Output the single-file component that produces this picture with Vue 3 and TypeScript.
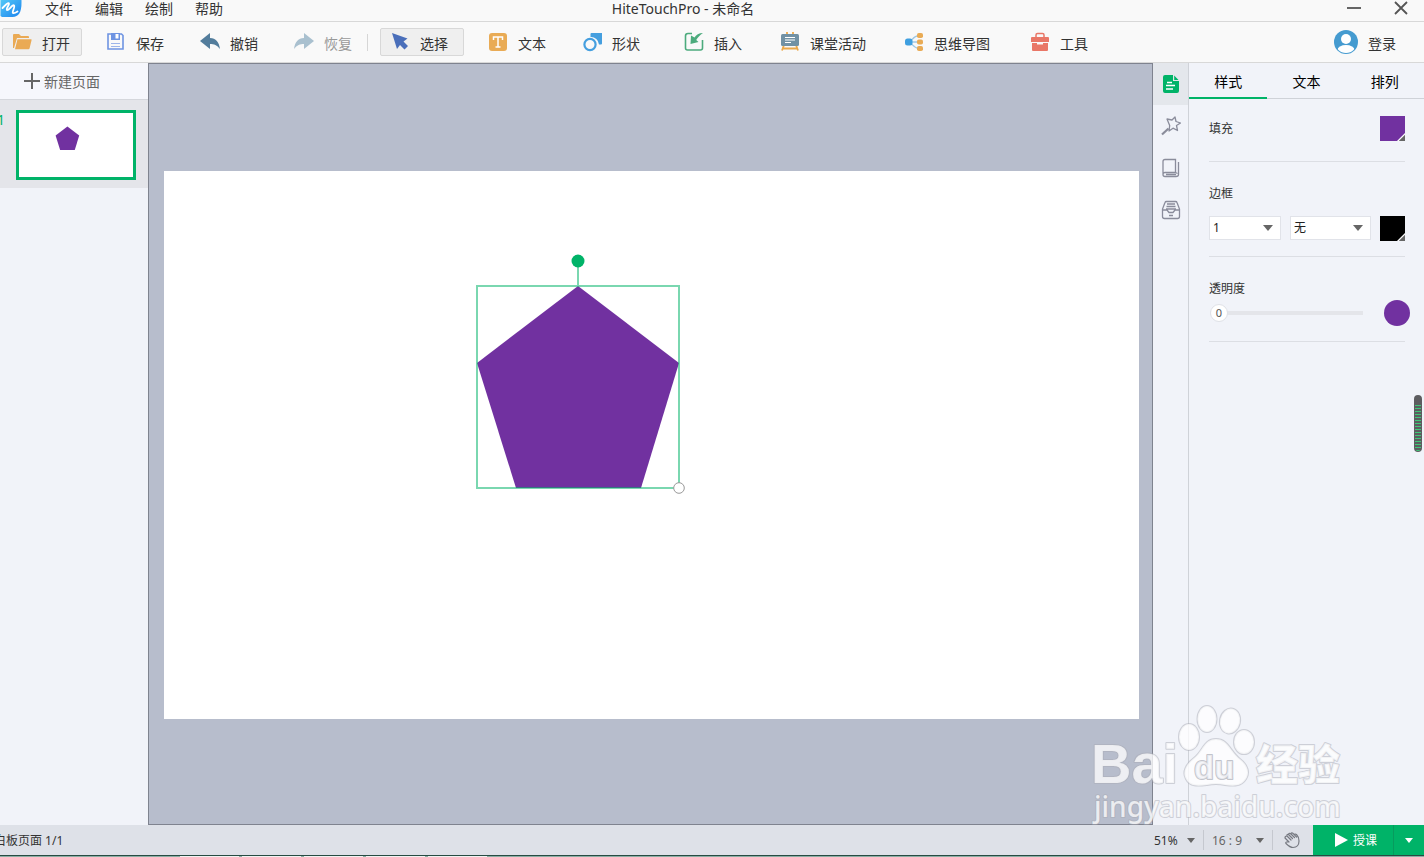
<script setup lang="ts">
import { ref } from 'vue'

interface Tool {
  id: string
  label: string
  spacing?: string
}

const menus = ['文件', '编辑', '绘制', '帮助']

const fileTools: Tool[] = [
  { id: 'open', label: '打开' },
  { id: 'save', label: '保存' },
  { id: 'undo', label: '撤销' },
  { id: 'redo', label: '恢复' },
]

const drawTools: Tool[] = [
  { id: 'select', label: '选择' },
  { id: 'text', label: '文本', spacing: 'roomy' },
  { id: 'shape', label: '形状', spacing: 'tight' },
  { id: 'insert', label: '插入', spacing: 'wide' },
  { id: 'class', label: '课堂活动' },
  { id: 'mind', label: '思维导图' },
  { id: 'kit', label: '工具', spacing: 'roomy' },
]

const tabs = ['样式', '文本', '排列']
const rail = ['page', 'wand', 'book', 'tray']

const activeTool = ref('select')
const activeTab = ref('样式')
const activeRail = ref('page')
const borderWidth = ref('1')
const borderStyle = ref('无')
const opacity = ref(0)
const zoom = ref('51%')
const ratio = ref('16 : 9')
</script>

<template>
  <div class="app">
    <header class="titlebar">
      <nav class="menu">
        <svg class="logo" viewBox="0 0 22 18" aria-hidden="true">
          <defs>
            <linearGradient id="logoFill" x1="0" y1="0" x2="1" y2="1">
              <stop offset="0" stop-color="#53c8f7" />
              <stop offset="1" stop-color="#1c83ee" />
            </linearGradient>
          </defs>
          <path d="M0 0h21v3c0 9-3 14-9 14H3c-1 0-2 0-3-1z" fill="url(#logoFill)" />
          <path d="M2 8C5 5 8 2 8.500 3.500 9 5 5 9 6.500 10 8 11 12 4 13.500 5.500 15 7 11 12 12.500 13c1 .6 3-.5 4.500-1.500" fill="none" stroke="#fff" stroke-width="1.800" stroke-linecap="round" />
        </svg>
        <button v-for="m in menus" :key="m" type="button">{{ m }}</button>
      </nav>
      <div class="title">HiteTouchPro - 未命名</div>
      <div class="window-buttons">
        <button type="button" aria-label="最小化">
          <svg viewBox="0 0 16 16"><path d="M1 8h14" stroke="#666" stroke-width="2" /></svg>
        </button>
        <button type="button" aria-label="关闭">
          <svg viewBox="0 0 16 16"><path d="M2 2l12 12M14 2L2 14" stroke="#555" stroke-width="1.800" /></svg>
        </button>
      </div>
    </header>

    <div class="toolbar">
      <div class="group files">
        <button v-for="t in fileTools" :key="t.id" type="button" class="tool" :class="{ raised: t.id === 'open' }" :disabled="t.id === 'redo'">
          <svg viewBox="0 0 20 20" aria-hidden="true">
            <g v-if="t.id === 'open'" fill="#eaaa54">
              <path d="M1 16V3q0-1 1-1h5l2 2h7q1 0 1 1v1H5L2 16z" />
              <path d="M5.500 7.200H19q.8 0 .6.8l-2 8.200q-.3 1-1.200 1H3z" />
            </g>
            <g v-else-if="t.id === 'save'">
              <path d="M2 2h13.500l1.500 1.500V17H2z" fill="#f9f9f9" stroke="#6f94e2" stroke-width="1.600" />
              <path d="M5 1h9v7H5z" fill="#6f94e2" />
              <path d="M9.500 2h3v4.500h-3z" fill="#fff" />
              <path d="M5 11.500h9M5 14.500h9" stroke="#9db5ea" stroke-width="1" />
            </g>
            <path v-else-if="t.id === 'undo'" d="M0 9L10 1v5c6 0 9 4 10 11-3-4-6-5-10-5v5z" fill="#537d9c" />
            <path v-else d="M20 9L10 1v5C4 6 1 10 0 17c3-4 6-5 10-5v5z" fill="#a9c0cf" />
          </svg>
          <span>{{ t.label }}</span>
        </button>
      </div>
      <i class="rule" />
      <div class="group draws">
        <button v-for="t in drawTools" :key="t.id" type="button" class="tool" :class="[t.spacing, { raised: t.id === activeTool }]" @click="activeTool = t.id">
          <svg viewBox="0 0 20 20" aria-hidden="true">
            <path v-if="t.id === 'select'" d="M2 1l15.500 5.500-4 3 4.500 4.500-3.500 3.500-4.500-4.500-3 4z" fill="#4a6fba" />
            <g v-else-if="t.id === 'text'">
              <rect x="1" y="1" width="18" height="18" rx="3" fill="#e9ab55" />
              <path d="M5.500 8V5h9v3M10 5v10M7.500 15h5" fill="none" stroke="#fff" stroke-width="1.500" />
            </g>
            <g v-else-if="t.id === 'shape'">
              <path d="M9.500 1H20v10.500q0 1-1 1h-2A8 8 0 0 0 8.500 5V2q0-1 1-1z" fill="#459fdf" />
              <circle cx="8" cy="12.500" r="5.600" fill="none" stroke="#459fdf" stroke-width="2.200" />
            </g>
            <g v-else-if="t.id === 'insert'">
              <path d="M8 1.500H4q-2.500 0-2.500 2.500v12q0 2 2 2h13q2 0 2-2V8" fill="none" stroke="#4cab7d" stroke-width="1.600" />
              <path d="M19 1c-4 0-7 2-8.500 4.500L7 3.500 6.500 12l8-2-2.300-2C14 5 16 3 19 1z" fill="#4cab7d" />
            </g>
            <g v-else-if="t.id === 'class'">
              <path d="M7 0v3M13 0v3M4 13l-2 5.500M16 13l2 5.500M3 16.500h14" stroke="#eba84a" stroke-width="1.800" />
              <rect x="1" y="2" width="18" height="12" rx="1.500" fill="#7191a4" />
              <path d="M5 5.500h10M5 8h10M5 10.500h6" stroke="#fff" stroke-width="1" />
            </g>
            <g v-else-if="t.id === 'mind'">
              <path d="M5 10C8 9 9 4 15 3.500M5 10h11M5 10c3 1 4 6 10 6.500" fill="none" stroke="#a0c8e3" stroke-width="1.300" />
              <rect x="1" y="6.500" width="7.500" height="7" rx="2.500" fill="#3e9fe0" />
              <g fill="#e9ab55">
                <rect x="13" y="1" width="6" height="5" rx="1.800" />
                <rect x="13" y="7.500" width="6" height="5" rx="1.800" />
                <rect x="13" y="14" width="6" height="5" rx="1.800" />
              </g>
            </g>
            <g v-else>
              <path d="M6 5.500V3Q6 1.500 7.500 1.500h5Q14 1.500 14 3v2.500" fill="none" stroke="#e97767" stroke-width="1.500" />
              <path d="M1 6q0-1 1-1h16q1 0 1 1v4H1zM2 11h5v1.500h6V11h5v7q0 1-1 1H3q-1 0-1-1z" fill="#e97767" />
            </g>
          </svg>
          <span>{{ t.label }}</span>
        </button>
      </div>
      <button type="button" class="login">
        <svg viewBox="0 0 24 24" aria-hidden="true">
          <defs><clipPath id="avatar"><circle cx="12" cy="12" r="11" /></clipPath></defs>
          <circle cx="12" cy="12" r="12" fill="#459bd0" />
          <circle cx="12" cy="9" r="5" fill="#fff" />
          <ellipse cx="12" cy="20" rx="8.500" ry="5" fill="#fff" clip-path="url(#avatar)" />
        </svg>
        <span>登录</span>
      </button>
    </div>

    <main class="work">
      <aside class="pages">
        <button type="button" class="new-page">
          <svg viewBox="0 0 16 16" aria-hidden="true"><path d="M8 0v16M0 8h16" stroke="#666" stroke-width="2" /></svg>
          <span>新建页面</span>
        </button>
        <div class="page-item">
          <span class="number">1</span>
          <button type="button" class="thumb" aria-label="页面 1">
            <svg viewBox="0 0 975 548"><path d="M414 115L515 192 477 317H352L313 192z" fill="#7131a0" /></svg>
          </button>
        </div>
      </aside>

      <section class="canvas">
        <svg class="board" viewBox="0 0 975 548">
          <rect width="975" height="548" fill="#fff" />
          <path d="M414 115L515 192 477 317H352L313 192z" fill="#7131a0" />
          <g fill="none" stroke="#00b368" stroke-opacity=".52" stroke-width="2">
            <path d="M313 115h202v202H313zM414 115V96" />
          </g>
          <circle cx="414" cy="90" r="6.500" fill="#00b368" />
          <circle cx="515" cy="317" r="5.300" fill="#fff" stroke="#999" stroke-width="1" />
        </svg>
      </section>

      <nav class="rail">
        <button v-for="r in rail" :key="r" type="button" :aria-label="r" :class="{ on: r === activeRail }" @click="activeRail = r">
          <svg viewBox="0 0 20 20" aria-hidden="true">
            <g v-if="r === 'page'">
              <path d="M4 1h8v6h6v10q0 2-2 2H4q-2 0-2-2V3q0-2 2-2zM13.200 1.500L17.500 6h-4.300z" fill="#00b368" />
              <path d="M6 8.500h5M5 11.500h9M5 15h7" stroke="#fff" stroke-width="1.300" />
            </g>
            <g v-else-if="r === 'wand'" fill="none" stroke="#8a8c9b">
              <path d="M6 3l5 1L14 1l1 4.500 4.500 1.500-4 2.500 1 5-4.500-2.300L8 15l.7-5.500z" stroke-width="1.300" stroke-linejoin="round" />
              <path d="M7.500 12.500L1 18.500" stroke-width="2.200" />
            </g>
            <g v-else-if="r === 'book'" fill="none" stroke="#8a8c9b" stroke-width="1.300">
              <path d="M4 1.500h10.500v13H4q-2 0-2 2V3.500q0-2 2-2zM2 16.500q0 2 2 2h11q2.500 0 2.500-2V4M5 16.500h10M14.500 14.500l2 1" />
            </g>
            <g v-else fill="none" stroke="#8a8c9b" stroke-width="1.300">
              <path d="M1.500 9v7.500q0 2 2 2h13q2 0 2-2V9L16 2.500q-.3-1-1.500-1h-9q-1.200 0-1.500 1zM1.500 10H6l2 2.500h4L14 10h4.500M6 4h8M5.500 6.500h9M5 9h10M8 15.500h4" />
            </g>
          </svg>
        </button>
      </nav>

      <aside class="panel">
        <div class="tabs" role="tablist">
          <button v-for="t in tabs" :key="t" type="button" role="tab" :aria-selected="t === activeTab" :class="{ on: t === activeTab }" @click="activeTab = t">{{ t }}</button>
        </div>
        <section class="prop fill">
          <span>填充</span>
          <button type="button" class="swatch purple" aria-label="填充颜色"><svg viewBox="0 0 9 9"><path d="M9 0v9H0z" fill="#fff" /><path d="M9 2v7H2z" fill="#666" /></svg></button>
        </section>
        <section class="prop border">
          <span>边框</span>
          <div class="controls">
            <label class="dropdown narrow">
              <select v-model="borderWidth" aria-label="边框粗细"><option>1</option><option>2</option></select>
            </label>
            <label class="dropdown">
              <select v-model="borderStyle" aria-label="边框样式"><option>无</option><option>实线</option></select>
            </label>
            <button type="button" class="swatch black" aria-label="边框颜色"><svg viewBox="0 0 9 9"><path d="M9 0v9H0z" fill="#fff" /><path d="M9 2v7H2z" fill="#666" /></svg></button>
          </div>
        </section>
        <section class="prop alpha">
          <label for="opacity">透明度</label>
          <div class="slider">
            <div class="track">
              <input id="opacity" v-model="opacity" type="range" min="0" max="100" />
              <output for="opacity">{{ opacity }}</output>
            </div>
            <i class="dot" />
          </div>
        </section>
        <i class="handle" />
      </aside>

      <svg class="watermark" viewBox="0 0 264 130" aria-hidden="true">
        <g fill="#fff" fill-opacity=".76" stroke="#a9abb5" stroke-opacity=".5" stroke-width="2" stroke-linejoin="round" paint-order="stroke">
          <text x="3" y="83" class="brand">Bai</text>
          <ellipse cx="101" cy="37" rx="10" ry="13" />
          <ellipse cx="119" cy="19" rx="9.500" ry="13" />
          <ellipse cx="142" cy="21" rx="10" ry="12.500" transform="rotate(12 142 21)" />
          <ellipse cx="156" cy="42" rx="10" ry="12" />
          <path d="M128 39c12 0 14 12 24 20 8 6 10 14 6 20-5 8-13 7-21 6q-9-2-18 0c-9 1-17 2-21-6-4-7 0-15 8-21 9-7 10-19 22-19z" />
          <text x="106" y="79" class="inner">du</text>
          <text x="168" y="80" class="han">经验</text>
          <text x="6" y="117" class="site">jingyan.baidu.com</text>
        </g>
      </svg>
    </main>

    <footer class="status">
      <span class="page-count">白板页面 1/1</span>
      <label class="pick zoom"><select v-model="zoom" aria-label="缩放"><option>51%</option><option>100%</option></select></label>
      <i class="divider" />
      <label class="pick ratio"><select v-model="ratio" aria-label="页面比例"><option>16 : 9</option><option>4 : 3</option></select></label>
      <i class="divider" />
      <button type="button" class="hand" aria-label="拖动">
        <svg viewBox="0 0 18 18" fill="none" stroke="#777a82" stroke-width="1.200" stroke-linecap="round" stroke-linejoin="round">
          <path d="M2 7l4 4c-2-.5-4 0-3 1.500 2 2 4 4 7 4 4 0 6-3 6-6.500C16 7 15 5 13.500 3.500q-1.500-1-2 .3L9.500 2Q8 1.500 8 3 6 1.500 5.500 3.500 3.500 3 4 5 2 5 2 7zM5.500 3.500l4 4M8 3l3.500 3.500M11.500 3.800l2 2.200M4 5l4 4" />
        </svg>
      </button>
      <div class="teach">
        <button type="button" class="start">
          <svg viewBox="0 0 13 14" aria-hidden="true"><path d="M0 0l13 7-13 7z" fill="#fff" /></svg>
          <span>授课</span>
        </button>
        <button type="button" class="more" aria-label="更多授课选项"><i /></button>
      </div>
    </footer>
    <div class="edge"><i v-for="n in 5" :key="n" /></div>
  </div>
</template>

<style>
body {
  margin: 0;
}
</style>

<style scoped>
.app {
  display: flex;
  flex-direction: column;
  height: 100vh;
  overflow: hidden;
  background: #f1f3f9;
  color: #333;
  font: 14px/20px "Noto Sans", "Noto Sans CJK SC", sans-serif;
}
button,
select {
  margin: 0;
  padding: 0;
  border: 0;
  border-radius: 0;
  background: none;
  color: inherit;
  font: inherit;
}
svg {
  display: block;
  flex: none;
}
.titlebar {
  display: grid;
  grid-template-columns: 233px 1fr 291px;
  flex: none;
  height: 21px;
  border-bottom: 1px solid #d8d8d8;
  background: #f9f9f9;
}
.menu {
  display: flex;
  align-items: flex-start;
  gap: 22px;
}
.menu button,
.title {
  height: 18px;
  line-height: 18px;
}
.logo {
  width: 23px;
  height: 18px;
}
.menu button {
  width: 28px;
  white-space: nowrap;
}
.title {
  text-align: center;
}
.window-buttons {
  display: flex;
  align-items: flex-start;
  justify-content: flex-end;
  gap: 31px;
  padding-right: 15px;
}
.window-buttons svg {
  width: 16px;
  height: 16px;
}
.toolbar {
  display: flex;
  align-items: center;
  flex: none;
  height: 40px;
  padding: 0 28px 0 2px;
  border-bottom: 1px solid #d8d8d8;
  background: #f9f9f9;
}
.group {
  display: flex;
}
.files {
  gap: 14px;
}
.draws {
  gap: 8px;
}
.tool {
  display: flex;
  align-items: center;
  gap: 10px;
  box-sizing: border-box;
  height: 28px;
  padding: 0 11px 0 9px;
  border: 1px solid transparent;
  white-space: nowrap;
}
.tool svg {
  width: 20px;
  height: 20px;
}
.tool span,
.login span {
  padding-top: 3px;
}
.draws .tool {
  padding-right: 15px;
}
.tool.raised {
  border-color: #d8d8d8;
  border-radius: 2px;
  background: #efefef;
}
.tool:disabled {
  color: #999;
}
.tool.roomy {
  margin-left: 6px;
}
.tool.tight {
  margin-left: 2px;
}
.tool.wide {
  margin-left: 10px;
}
.draws .tool:nth-child(n + 5):not(.roomy) {
  margin-left: 4px;
}
.rule {
  width: 1px;
  height: 17px;
  margin: 0 12px 0 3px;
  background: #d6d6d6;
}
.login {
  display: flex;
  align-items: center;
  gap: 10px;
  margin-left: auto;
}
.login svg {
  width: 24px;
  height: 24px;
}
.work {
  position: relative;
  display: flex;
  flex: 1;
  min-height: 0;
}
.pages {
  flex: none;
  width: 148px;
}
.new-page {
  display: flex;
  align-items: center;
  gap: 4px;
  box-sizing: border-box;
  width: 100%;
  height: 37px;
  padding-left: 24px;
  border-bottom: 1px solid #d5d7dc;
  background: #f6f7fc;
  color: #666;
}
.new-page span {
  padding-top: 2px;
}
.new-page svg {
  width: 16px;
  height: 16px;
}
.page-item {
  display: flex;
  padding: 10px 12px 8px 0;
  background: #e4e5ea;
}
.number {
  width: 16px;
  margin-left: -3px;
  color: #00b368;
}
.thumb {
  box-sizing: border-box;
  width: 120px;
  height: 70px;
  margin-left: 3px;
  border: 3px solid #00b368;
  background: #fff;
}
.thumb svg {
  width: 100%;
}
.canvas {
  display: flex;
  align-items: center;
  flex: 1;
  min-width: 0;
  padding: 2px 13px 0 15px;
  border: 1px solid #7f838f;
  background: #b7bdcc;
}
.board {
  flex: 1;
  min-width: 0;
}
.rail {
  flex: none;
  width: 35px;
  border-right: 1px solid #cfd2d8;
}
.rail button {
  display: flex;
  align-items: center;
  justify-content: center;
  width: 100%;
  height: 42px;
}
.rail .on {
  background: #e4e7ec;
}
.rail svg {
  width: 20px;
  height: 20px;
}
.panel {
  position: relative;
  flex: none;
  width: 235px;
  font-size: 12px;
}
.tabs {
  display: grid;
  grid-template-columns: repeat(3, 1fr);
  height: 35px;
  border-bottom: 1px solid #cfd2d8;
}
.tabs button {
  height: 36px;
  padding-top: 4px;
  border-bottom: 2px solid transparent;
  color: #000;
  font-size: 14px;
}
.tabs .on {
  border-color: #00b368;
}
.prop {
  margin: 0 19px 0 20px;
  border-bottom: 1px solid #dcdee4;
}
.fill {
  display: flex;
  justify-content: space-between;
  height: 45px;
  padding-top: 17px;
}
.fill > span {
  line-height: 26px;
}
.border {
  height: 72px;
  padding-top: 22px;
}
.alpha {
  height: 62px;
  padding-top: 22px;
}
.swatch {
  display: flex;
  align-items: flex-end;
  justify-content: flex-end;
  width: 25px;
  height: 25px;
}
.swatch svg {
  width: 8px;
  height: 8px;
}
.purple,
.dot {
  background: #7131a0;
}
.black {
  background: #000;
}
.controls {
  display: flex;
  gap: 9px;
  margin-top: 12px;
}
.dropdown {
  position: relative;
  flex: 1;
  color: #222;
}
.dropdown.narrow {
  flex: none;
  width: 72px;
}
.dropdown select {
  appearance: none;
  box-sizing: border-box;
  width: 100%;
  height: 24px;
  padding-left: 3px;
  border: 1px solid #e1e3e9;
  background: #fff;
}
.dropdown::after {
  position: absolute;
  top: 9px;
  right: 8px;
  border: 5px solid transparent;
  border-top: 6px solid #666;
  border-bottom: 0;
  content: "";
  pointer-events: none;
}
.slider {
  display: flex;
  align-items: center;
  justify-content: space-between;
  height: 26px;
  margin: 1px -5px 0 1px;
}
.track {
  position: relative;
  display: flex;
  width: 153px;
}
.track input {
  appearance: none;
  width: 100%;
  height: 18px;
  margin: 0;
  background: linear-gradient(#e4e5ea, #e4e5ea) center / 100% 4px no-repeat;
}
.track input::-webkit-slider-thumb {
  appearance: none;
  box-sizing: border-box;
  width: 18px;
  height: 18px;
  border: 1px solid #dfe1e7;
  border-radius: 50%;
  background: #fff;
}
.track output {
  position: absolute;
  left: 0;
  width: 18px;
  color: #555;
  font-size: 11px;
  line-height: 18px;
  text-align: center;
  pointer-events: none;
}
.dot {
  width: 26px;
  height: 26px;
  border-radius: 50%;
}
.handle {
  position: absolute;
  top: 332px;
  right: 2px;
  box-sizing: border-box;
  width: 8px;
  height: 57px;
  border: 1px solid #5d5d60;
  border-top-width: 10px;
  border-radius: 4px;
  background: repeating-linear-gradient(#3fc878 0 1px, #5d5d60 1px 3px);
}
.watermark {
  position: absolute;
  right: 72px;
  bottom: -5px;
  width: 264px;
  height: 130px;
  overflow: visible;
  pointer-events: none;
}
.brand {
  font: bold 56px "Liberation Sans", sans-serif;
}
.inner {
  fill: #f5f6fa;
  stroke-opacity: 0.7;
  font: bold 33px "Liberation Sans", sans-serif;
}
.han {
  font: 900 42px "Noto Sans CJK SC", sans-serif;
}
.site {
  font: 500 28px "Noto Sans", sans-serif;
}
.status {
  display: flex;
  align-items: center;
  flex: none;
  height: 30px;
  background: #dee1e8;
  font-size: 12px;
}
.page-count {
  margin: 0 auto 0 -6px;
  padding-top: 2px;
}
.pick {
  position: relative;
  padding-top: 2px;
}
.pick select {
  appearance: none;
  width: 100%;
  padding-right: 16px;
}
.pick::after,
.more i {
  border: 4px solid transparent;
  border-top: 5px solid #666;
  border-bottom: 0;
  content: "";
}
.pick::after {
  position: absolute;
  top: 9px;
  right: 0;
  pointer-events: none;
}
.zoom {
  width: 41px;
}
.ratio {
  width: 52px;
  color: #666;
}
.divider {
  width: 1px;
  height: 20px;
  margin: 0 8px;
  background: #c5c8cf;
}
.hand {
  margin: 0 12px 0 2px;
}
.hand svg {
  width: 18px;
  height: 18px;
}
.teach {
  display: flex;
  width: 111px;
  height: 100%;
  background: #00b368;
  color: #fff;
}
.start {
  display: flex;
  align-items: center;
  justify-content: center;
  gap: 5px;
  flex: 1;
  padding-left: 6px;
  border-right: 1px solid #079b5e;
}
.start span {
  padding-top: 2px;
}
.start svg {
  width: 13px;
  height: 14px;
}
.more {
  display: flex;
  align-items: center;
  justify-content: center;
  width: 30px;
}
.more i {
  border-top-color: #fff;
}
.edge {
  display: flex;
  flex: none;
  gap: 3px;
  height: 1px;
  padding-left: 180px;
  border-top: 1px solid #274b42;
  background: #8aaea4;
}
.edge i {
  width: 59px;
  background: #f2f2f2;
}
</style>
